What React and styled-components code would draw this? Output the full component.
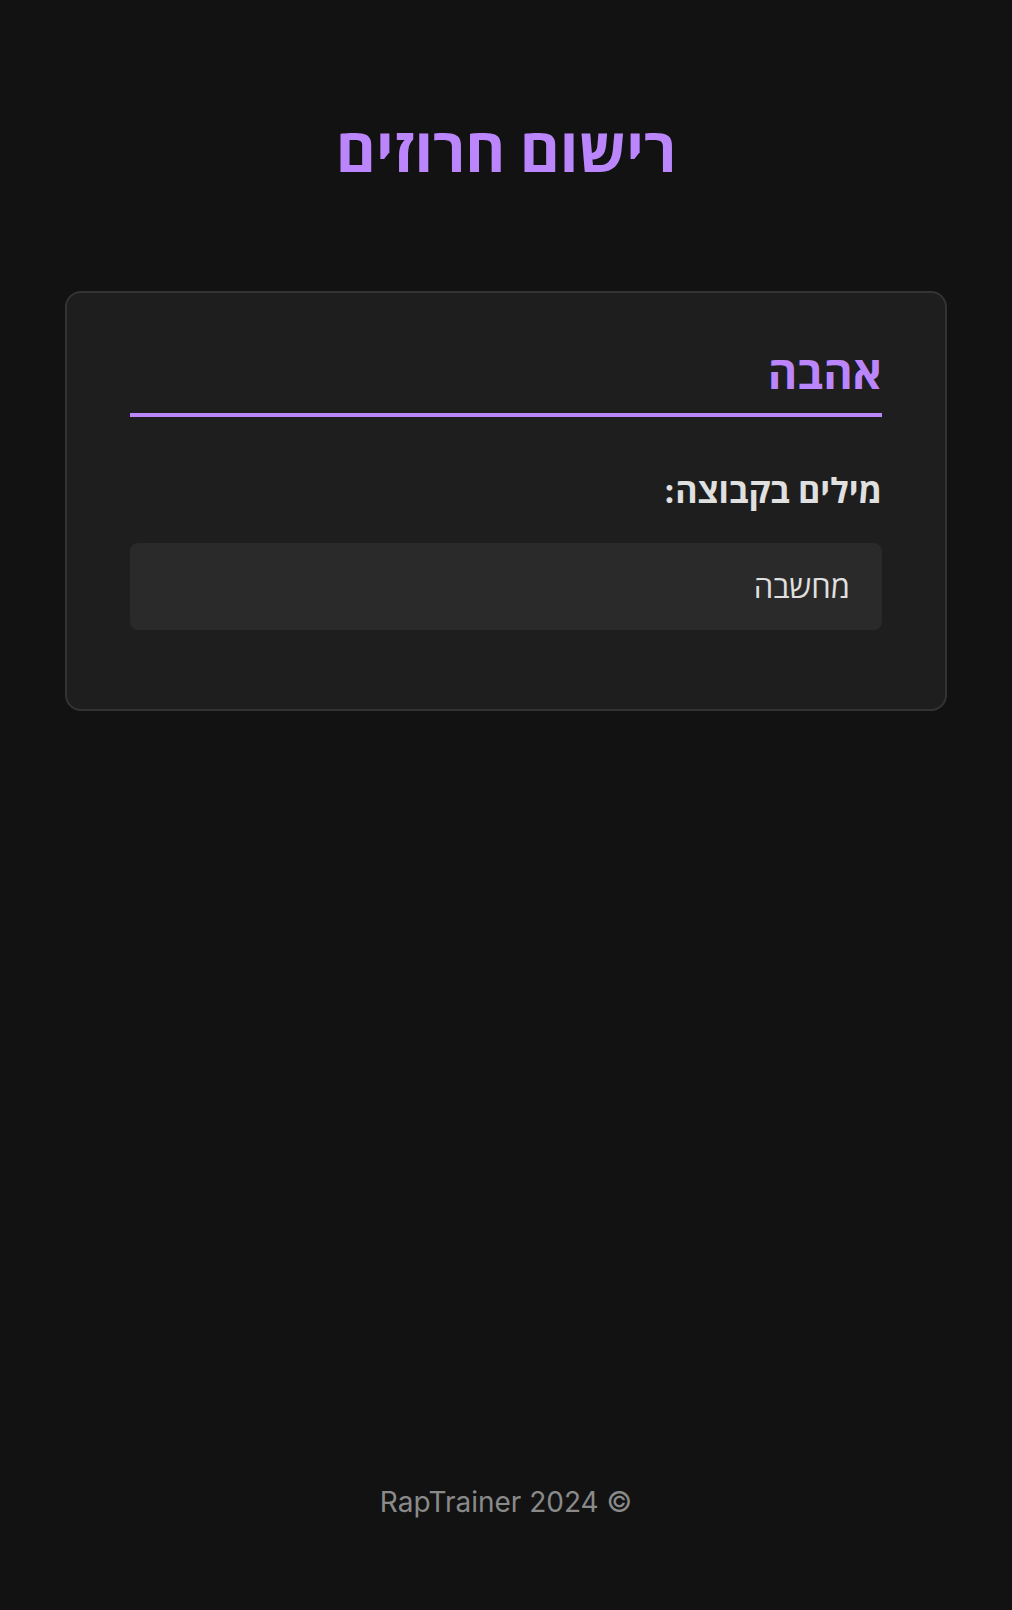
import React from "react";
import styled, { createGlobalStyle } from "styled-components";

const GlobalStyle = createGlobalStyle`
  html, body {
    margin: 0;
    padding: 0;
    background: #121212;
  }
  body {
    font-family: Inter, "Open Sans", "DejaVu Sans", sans-serif;
    color: #e0e0e0;
  }
  * { box-sizing: border-box; }
`;

const Page = styled.div`
  direction: rtl;
  min-height: 1610px;
  display: flex;
  flex-direction: column;
  align-items: stretch;
`;

const Header = styled.header`
  padding: 114px 0 0;
  text-align: center;
`;

const Title = styled.h1`
  margin: 0;
  font-size: 61px;
  line-height: 1.2;
  font-weight: 700;
  color: #bb86fc;
`;

const Main = styled.main`
  padding: 104px 65px 0;
`;

const Card = styled.section`
  background: #1e1e1e;
  border: 2px solid #333333;
  border-radius: 16px;
  padding: 53px 63px 64px;
`;

const GroupTitle = styled.h2`
  margin: 0;
  padding-bottom: 13px;
  border-bottom: 4px solid #bb86fc;
  font-size: 45px;
  line-height: 1.2;
  font-weight: 700;
  color: #bb86fc;
`;

const SubTitle = styled.h3`
  margin: 54px 0 0;
  font-size: 34px;
  line-height: 1.2;
  font-weight: 700;
  color: #e0e0e0;
`;

const WordList = styled.ul`
  list-style: none;
  margin: 31px 0 15px;
  padding: 0;
  display: flex;
  flex-direction: column;
  gap: 16px;
`;

const WordItem = styled.li`
  background: #2a2a2a;
  border-radius: 8px;
  padding: 0 32px;
  height: 87px;
  display: flex;
  align-items: center;
  font-size: 31px;
  color: #e0e0e0;
`;

const Footer = styled.footer`
  margin-top: auto;
  padding-bottom: 91px;
  text-align: center;
  font-size: 28px;
  color: #8a8a8a;
`;

const words = ["מחשבה"];

export default function App() {
  return (
    <>
      <GlobalStyle />
      <Page>
        <Header>
          <Title>רישום חרוזים</Title>
        </Header>
        <Main>
          <Card>
            <GroupTitle>אהבה</GroupTitle>
            <SubTitle>מילים בקבוצה:</SubTitle>
            <WordList>
              {words.map((w) => (
                <WordItem key={w}>{w}</WordItem>
              ))}
            </WordList>
          </Card>
        </Main>
        <Footer>© 2024 RapTrainer</Footer>
      </Page>
    </>
  );
}
